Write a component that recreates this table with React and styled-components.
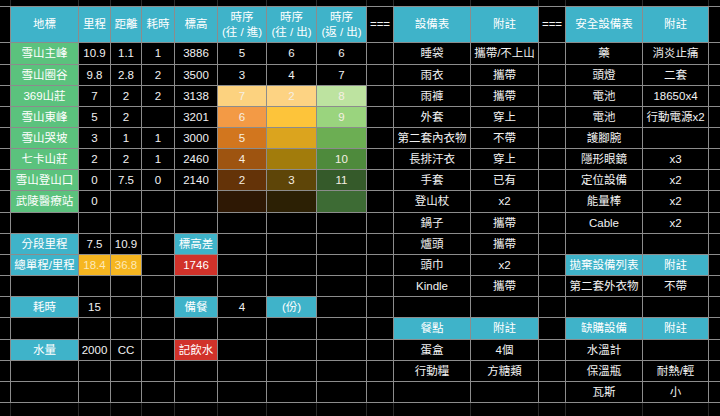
import React from 'react';
import styled, { createGlobalStyle } from 'styled-components';

const Global = createGlobalStyle`
  html, body { margin: 0; padding: 0; background: #000; }
  body { overflow: hidden; }
`;

const COLS = [10, 67, 31, 30, 32, 42, 48, 49, 49, 26, 76, 67, 26, 76, 65];
const ROWS = [6, 35, 21, 20, 20, 20, 20, 20, 20, 21, 20, 20, 20, 20, 20, 21, 20, 20, 20];

const Sheet = styled.div`
  width: 720px;
  height: 416px;
  display: grid;
  grid-template-columns: ${COLS.map((c) => c + 'px').join(' ')} 1fr;
  grid-template-rows: ${ROWS.map((r) => r + 'px').join(' ')} 1fr;
  gap: 1px;
  background: linear-gradient(to bottom, #2c2c2c 0 6px, #8c8c8c 6px 403px, #2a2a2a 403px);
  font-family: "Liberation Sans", "Noto Sans CJK TC", sans-serif;
`;

const PALETTE = {
  cyan: ['#3fb3c9', '#ffffff'],
  green: ['#5bc27d', '#ffffff'],
  yellow: ['#f6b620', '#fde9b8'],
  red: ['#d1322a', '#ffffff'],
};

const Cell = styled.div`
  background: ${(p) => p.$bg || '#000'};
  color: ${(p) => p.$fg || '#f2f2f2'};
  display: flex;
  align-items: center;
  justify-content: center;
  text-align: center;
  font-size: 11.5px;
  line-height: 15px;
  white-space: pre-line;
  overflow: hidden;
`;

const H = (t) => ({ t, k: 'cyan' });
const G = (t) => ({ t, k: 'green' });
const Y = (t) => ({ t, k: 'yellow' });
const R = (t) => ({ t, k: 'red' });
const X = (t, bg, fg = '#f6efe2') => ({ t, bg, fg });

const heat = {
  a: ['#fcd27f', '#f39a45', '#d2761e', '#9e5410', '#643308', '#2e1804'],
  b: ['#fdd383', '#fdc43a', '#dba41e', '#a27c0c', '#5e4508', '#2c2004'],
  c: ['#bde3a0', '#9ad47e', '#6cae53', '#4e8a3c', '#355a2a', '#3d6b34'],
};

const hr = (i, a, b, c) => [X(a, heat.a[i]), X(b, heat.b[i]), X(c, heat.c[i])];

const DATA = [
  [H('地標'), H('里程'), H('距離'), H('耗時'), H('標高'), H('時序\n(往 / 進)'), H('時序\n(往 / 出)'), H('時序\n(返 / 出)'), '===', H('設備表'), H('附註'), '===', H('安全設備表'), H('附註')],
  [G('雪山主峰'), '10.9', '1.1', '1', '3886', '5', '6', '6', '', '睡袋', '攜帶/不上山', '', '藥', '消炎止痛'],
  [G('雪山圈谷'), '9.8', '2.8', '2', '3500', '3', '4', '7', '', '雨衣', '攜帶', '', '頭燈', '二套'],
  [G('369山莊'), '7', '2', '2', '3138', ...hr(0, '7', '2', '8'), '', '雨褲', '攜帶', '', '電池', '18650x4'],
  [G('雪山東峰'), '5', '2', '', '3201', ...hr(1, '6', '', '9'), '', '外套', '穿上', '', '電池', '行動電源x2'],
  [G('雪山哭坡'), '3', '1', '1', '3000', ...hr(2, '5', '', ''), '', '第二套內衣物', '不帶', '', '護腳腕', ''],
  [G('七卡山莊'), '2', '2', '1', '2460', ...hr(3, '4', '', '10'), '', '長排汗衣', '穿上', '', '隱形眼鏡', 'x3'],
  [G('雪山登山口'), '0', '7.5', '0', '2140', ...hr(4, '2', '3', '11'), '', '手套', '已有', '', '定位設備', 'x2'],
  [G('武陵醫療站'), '0', '', '', '', ...hr(5, '', '', ''), '', '登山杖', 'x2', '', '能量棒', 'x2'],
  ['', '', '', '', '', '', '', '', '', '鍋子', '攜帶', '', 'Cable', 'x2'],
  [H('分段里程'), '7.5', '10.9', '', H('標高差'), '', '', '', '', '爐頭', '攜帶', '', '', ''],
  [H('總單程/里程'), Y('18.4'), Y('36.8'), '', R('1746'), '', '', '', '', '頭巾', 'x2', '', H('拋棄設備列表'), H('附註')],
  ['', '', '', '', '', '', '', '', '', 'Kindle', '攜帶', '', '第二套外衣物', '不帶'],
  [H('耗時'), '15', '', '', H('備餐'), '4', H('(份)'), '', '', '', '', '', '', ''],
  ['', '', '', '', '', '', '', '', '', H('餐點'), H('附註'), '', H('缺購設備'), H('附註')],
  [H('水量'), '2000', 'CC', '', R('記飲水'), '', '', '', '', '蛋盒', '4個', '', '水溫計', ''],
  ['', '', '', '', '', '', '', '', '', '行動糧', '方糖類', '', '保溫瓶', '耐熱/輕'],
  ['', '', '', '', '', '', '', '', '', '', '', '', '瓦斯', '小'],
];

const TOTAL = COLS.length + 1;

function renderCell(v, key) {
  if (v == null || typeof v === 'string') {
    return <Cell key={key}>{v}</Cell>;
  }
  if (v.k) {
    const [bg, fg] = PALETTE[v.k];
    return (
      <Cell key={key} $bg={bg} $fg={fg}>
        {v.t}
      </Cell>
    );
  }
  return (
    <Cell key={key} $bg={v.bg} $fg={v.fg}>
      {v.t}
    </Cell>
  );
}

export default function App() {
  const cells = [];
  const blankRow = (r) => {
    for (let c = 0; c < TOTAL; c++) cells.push(<Cell key={`b${r}-${c}`} />);
  };
  blankRow('top');
  DATA.forEach((row, r) => {
    cells.push(<Cell key={`l${r}`} />);
    row.forEach((v, c) => cells.push(renderCell(v, `c${r}-${c}`)));
    cells.push(<Cell key={`t${r}`} />);
  });
  blankRow('bottom');
  return (
    <>
      <Global />
      <Sheet>{cells}</Sheet>
    </>
  );
}
